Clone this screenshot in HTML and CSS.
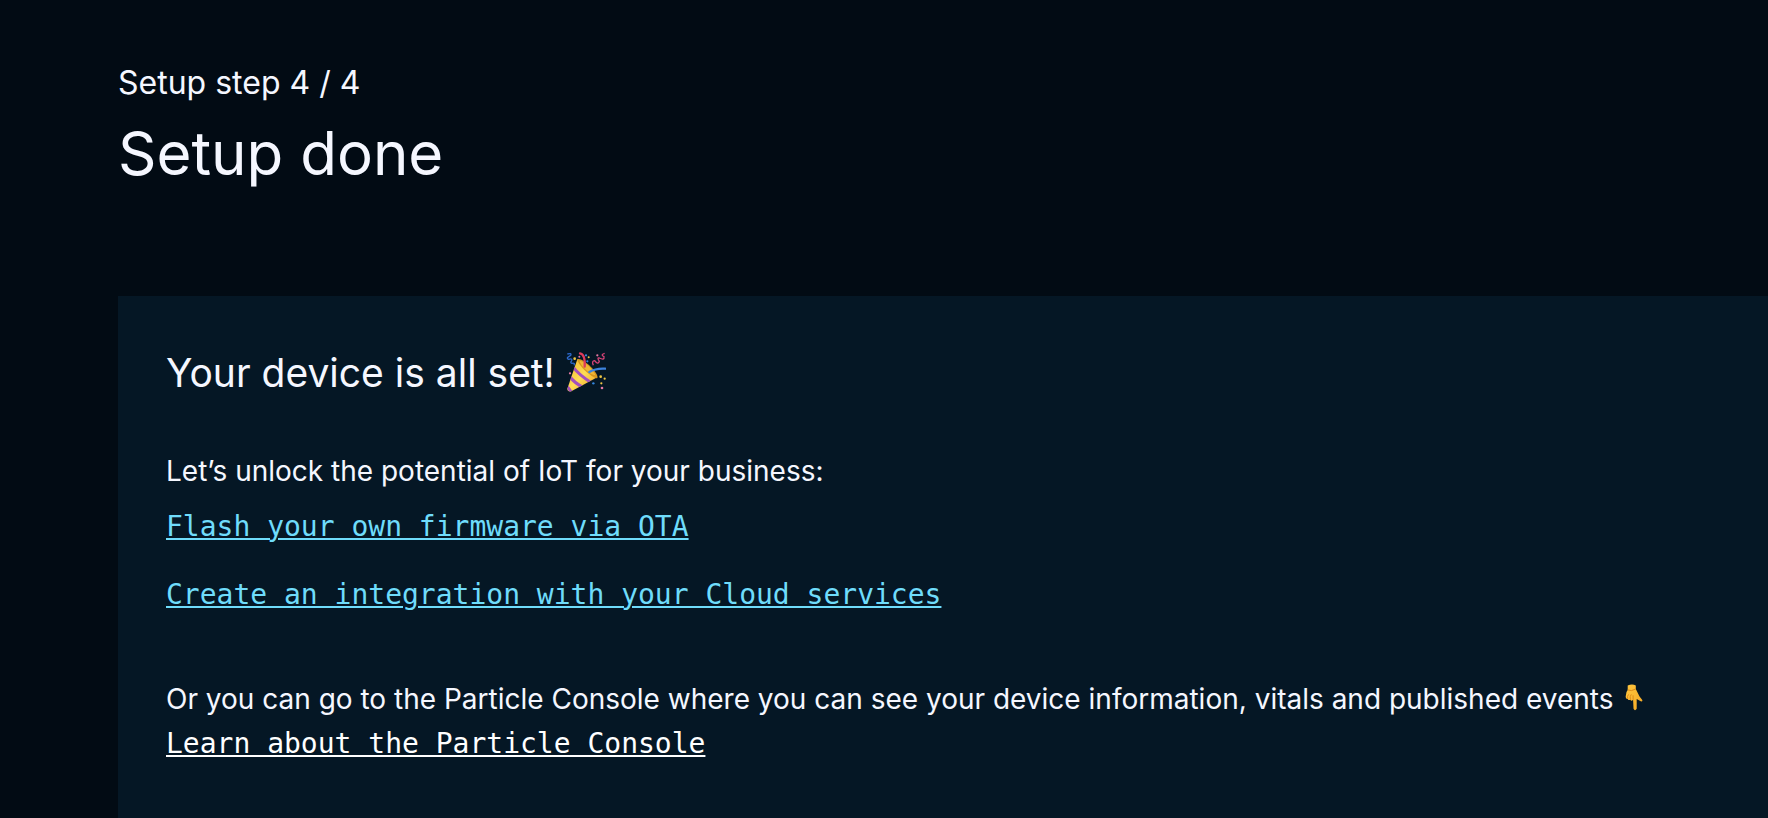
FILE: index.html
```html
<!DOCTYPE html>
<html lang="en">
<head>
<meta charset="utf-8">
<title>Setup done</title>
<meta name="viewport" content="width=device-width, initial-scale=1">
<link rel="stylesheet" href="styles.css">
</head>
<body class="page">
<header class="intro">
  <p class="step">Setup step 4 / 4</p>
  <h1 class="title">Setup done</h1>
</header>
<main class="card">
  <h2 class="card-title">Your device is all set!
    <svg class="popper" viewBox="0 0 60 60" role="img" aria-label="Party popper">
      <defs>
        <linearGradient id="cone" x1="0" y1="0" x2="1" y2="1"><stop offset="0" stop-color="#f0b62c"/><stop offset=".5" stop-color="#ffdc55"/><stop offset="1" stop-color="#e99a1f"/></linearGradient>
        <clipPath id="cone-clip"><path d="M17 11 L2 55 Q2 60 8 59 L47 38 Q36 18 17 11Z"/></clipPath>
      </defs>
      <path d="M17 11 L2 55 Q2 60 8 59 L47 38 Q36 18 17 11Z" fill="url(#cone)"/>
      <g clip-path="url(#cone-clip)" fill="none" stroke="#a34fbd" stroke-width="4.5"><path d="M10 22 Q20 35 38 46"/><path d="M5 36 Q13 47 26 53"/><path d="M0 50 Q5 55 9 62"/></g>
      <path d="M17 11 C23 7 50 31 47 39 C42 42 17 20 17 11Z" fill="#d8981f"/>
      <path d="M20 13 C27 13 42 27 44 35 C36 34 23 22 20 13Z" fill="#f0b736"/>
      <path d="M21 2 Q29 3 28 22" fill="none" stroke="#df3b5c" stroke-width="3.5" stroke-linecap="round"/>
      <path d="M35 30 Q45 24 59 25" fill="none" stroke="#3e83dd" stroke-width="3.5" stroke-linecap="round"/>
      <path d="M2 3 Q9 1 7 5 Q-1 9 4 11 Q11 9 8 14 Q6 16 9 17 Q14 16 12 20" fill="none" stroke="#2c68c9" stroke-width="2"/>
      <path d="M41 20 Q38 13 43 13 Q48 20 50 14 Q46 8 50 9 Q58 13 57 7 Q51 4 58 2" fill="none" stroke="#d54376" stroke-width="2"/>
      <g fill="#efc744"><circle cx="13" cy="10" r="2"/><circle cx="34" cy="8" r="1.5"/><circle cx="52" cy="37" r="2"/><circle cx="58" cy="40" r="1.7"/><circle cx="53" cy="47" r="1.7"/></g>
      <g fill="#3385dc"><circle cx="30" cy="5" r="1.7"/><circle cx="32" cy="14" r="1.7"/><circle cx="41" cy="47" r="1.8"/></g>
      <g fill="#e57aa4"><circle cx="20" cy="7" r="1.5"/><circle cx="47" cy="5" r="1.7"/><circle cx="6" cy="32" r="1.7"/><circle cx="54" cy="54" r="2"/></g>
    </svg>
  </h2>
  <section class="group">
    <p class="text">Let’s unlock the potential of IoT for your business:</p>
    <ul class="links">
      <li><a class="link" href="#firmware">Flash your own firmware via OTA</a></li>
      <li><a class="link" href="#integration">Create an integration with your Cloud services</a></li>
    </ul>
  </section>
  <section class="group">
    <p class="text">Or you can go to the Particle Console where you can see your device information, vitals and published events
      <svg class="hand" viewBox="0 0 20 30" role="img" aria-label="Pointing down">
        <defs><linearGradient id="skin" x1="0" y1="0" x2="1" y2="1"><stop offset="0" stop-color="#ffc83f"/><stop offset="1" stop-color="#f5a623"/></linearGradient></defs>
        <path d="M3 1 Q8 -1 12 1 L12 5 Q14 9 16 13 L19 17 Q20 19 18 19 L13 16 L13 27 Q11 30 9.500 27 L9 17 Q7 19 6 17 Q4 18 3 16 Q0 16 1 12 Q1 8 3 6Z" fill="url(#skin)"/>
        <path d="M3 16 Q2 13 4 11 M6 17 Q5 13 7 11 M9 17 V12 M3 6 Q7 8 12 5" fill="none" stroke="#d98417" stroke-width="1"/>
      </svg>
    </p>
    <a class="link link-plain" href="#console">Learn about the Particle Console</a>
  </section>
</main>
</body>
</html>
```
FILE: styles.css
```css
* {
  box-sizing: border-box;
}

.page {
  display: flex;
  flex-direction: column;
  min-height: 100vh;
  margin: 0;
  padding: 63px 0 0 118px;
  background: #020b14;
  color: #f5f7ff;
  font-family: Inter, "Liberation Sans", sans-serif;
}

.intro {
  margin-bottom: 105px;
}

.step,
.title,
.card-title,
.text,
.links {
  margin: 0;
  font-weight: 400;
}

.step {
  font-size: 32px;
  line-height: 40px;
}

.title {
  margin-top: 12px;
  font-size: 60px;
  line-height: 76px;
}

.card {
  flex: 1;
  display: flex;
  flex-direction: column;
  gap: 48px;
  padding: 49px 48px;
  background: #051725;
}

.card-title {
  font-size: 39px;
  line-height: 56px;
}

.popper {
  width: 40px;
  height: 40px;
  vertical-align: -5px;
}

.text {
  font-size: 28px;
  line-height: 44px;
}

.hand {
  width: 18px;
  height: 28px;
  margin-left: 4px;
  vertical-align: -3px;
}

.links {
  display: flex;
  flex-direction: column;
  gap: 24px;
  padding: 12px 0;
  list-style: none;
}

.link {
  color: #6fdcfb;
  font-family: "DejaVu Sans Mono", monospace;
  font-size: 28px;
  line-height: 44px;
  text-decoration-thickness: 2px;
  text-underline-offset: 2px;
}

.link-plain {
  display: inline-block;
  margin-top: 1px;
  color: #fff;
}
```
